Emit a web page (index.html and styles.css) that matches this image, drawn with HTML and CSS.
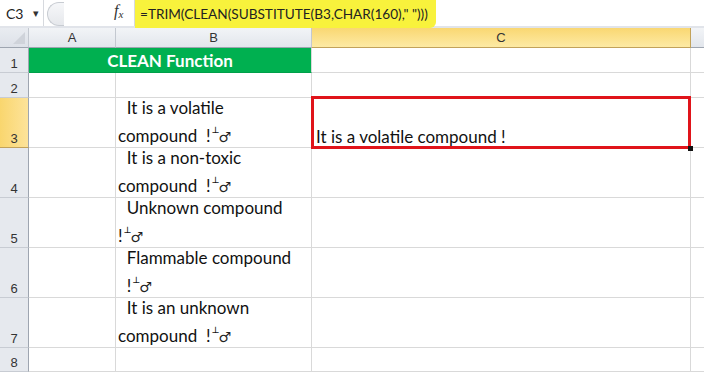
FILE: index.html
```html
<!DOCTYPE html>
<html>
  <head>
    <meta charset="UTF-8">
    <title>CLEAN Function</title>
    <link rel="stylesheet" href="styles.css">
  </head>
  <body>
    <div class="formula-bar">
      <div class="name-box">
        <span>C3</span>
        <span class="drop">&#9662;</span>
      </div>
      <div class="knob"></div>
      <div class="fx">f<sub>x</sub></div>
      <div class="formula">
        <span class="highlight">=TRIM(CLEAN(SUBSTITUTE(B3,CHAR(160)," ")))</span>
      </div>
    </div>

    <div class="sheet">
      <!-- column headers -->
      <div class="corner"><span class="tri"></span></div>
      <div class="col-head">A</div>
      <div class="col-head">B</div>
      <div class="col-head active">C</div>
      <div class="col-head edge"></div>

      <!-- row 1 -->
      <div class="row-head">1</div>
      <div class="cell title">CLEAN Function</div>
      <div class="cell"></div>
      <div class="cell edge"></div>

      <!-- row 2 -->
      <div class="row-head">2</div>
      <div class="cell"></div>
      <div class="cell"></div>
      <div class="cell"></div>
      <div class="cell edge"></div>

      <!-- row 3 -->
      <div class="row-head active">3</div>
      <div class="cell"></div>
      <div class="cell wrap"><span>&nbsp;&nbsp;It is a volatile<br>compound&nbsp;&nbsp;!<span class="junk">&#9524;</span><span class="male">&#9794;</span></span></div>
      <div class="cell result selected">It is a volatile compound !</div>
      <div class="cell edge"></div>

      <!-- row 4 -->
      <div class="row-head">4</div>
      <div class="cell"></div>
      <div class="cell wrap"><span>&nbsp;&nbsp;It is a non-toxic<br>compound&nbsp;&nbsp;!<span class="junk">&#9524;</span><span class="male">&#9794;</span></span></div>
      <div class="cell"></div>
      <div class="cell edge"></div>

      <!-- row 5 -->
      <div class="row-head">5</div>
      <div class="cell"></div>
      <div class="cell wrap"><span>&nbsp;&nbsp;Unknown compound<br>!<span class="junk">&#9524;</span><span class="male">&#9794;</span></span></div>
      <div class="cell"></div>
      <div class="cell edge"></div>

      <!-- row 6 -->
      <div class="row-head">6</div>
      <div class="cell"></div>
      <div class="cell wrap"><span>&nbsp;&nbsp;Flammable compound<br>&nbsp;&nbsp;!<span class="junk">&#9524;</span><span class="male">&#9794;</span></span></div>
      <div class="cell"></div>
      <div class="cell edge"></div>

      <!-- row 7 -->
      <div class="row-head">7</div>
      <div class="cell"></div>
      <div class="cell wrap"><span>&nbsp;&nbsp;It is an unknown<br>compound&nbsp;&nbsp;!<span class="junk">&#9524;</span><span class="male">&#9794;</span></span></div>
      <div class="cell"></div>
      <div class="cell edge"></div>

      <!-- row 8 -->
      <div class="row-head">8</div>
      <div class="cell"></div>
      <div class="cell"></div>
      <div class="cell"></div>
      <div class="cell edge"></div>
    </div>
  </body>
</html>
```

FILE: styles.css
```css
body {
  margin: 0;
  width: 704px;
  height: 372px;
  overflow: hidden;
  background-color: #ffffff;
  font-family: Lato, "Open Sans", sans-serif;
}

.formula-bar {
  display: flex;
  height: 26px;
  border-bottom: 2px solid #e1e4ea;
  background-color: #ffffff;
  font-size: 14px;
  color: #222;
}

.name-box {
  width: 44px;
  display: flex;
  align-items: center;
  padding-left: 6px;
  box-sizing: border-box;
  border-right: 1px solid #d6d9de;
}

.drop {
  font-size: 11px;
  margin-left: 10px;
  color: #333;
}

.knob {
  width: 16px;
  height: 22px;
  margin: 2px 0 0 3px;
  border: 1px solid #c8ccd2;
  border-right: none;
  border-radius: 12px 0 0 12px;
  background: linear-gradient(#f6f7f9, #e6e8ec);
}

.fx {
  margin-left: 50px;
  width: 20px;
  font-family: "Liberation Serif", serif;
  font-style: italic;
  font-size: 16px;
  padding-top: 2px;
  color: #333;
}

.fx sub {
  font-size: 11px;
  vertical-align: -2px;
}

.formula {
  flex: 1;
  border-left: 1px solid #d6d9de;
  display: flex;
}

.highlight {
  display: flex;
  align-items: center;
  height: 28px;
  padding: 0 8px 0 5px;
  background-color: #f8f23c;
  border-radius: 0 0 6px 0;
  font-size: 13.6px;
}

.sheet {
  display: grid;
  grid-template-columns: 29px 87px 196px 379px 13px;
  grid-template-rows: 20px 25px 25px 50px 50px 50px 50px 50px 24px;
  font-size: 17px;
  color: #111;
}

.corner {
  background: linear-gradient(#e9ecf1, #dde1e8);
  border-right: 1px solid #c3c8d0;
  border-bottom: 1px solid #9ea5b0;
  position: relative;
}

.tri {
  position: absolute;
  right: 3px;
  bottom: 3px;
  width: 0;
  height: 0;
  border-left: 12px solid transparent;
  border-bottom: 12px solid #cfd3da;
}

.col-head {
  display: flex;
  align-items: center;
  justify-content: center;
  background: linear-gradient(#f2f4f7, #e2e6ec);
  border-right: 1px solid #c3c8d0;
  border-bottom: 1px solid #9ea5b0;
  font-family: "Liberation Sans", sans-serif;
  font-size: 13px;
  color: #333;
}

.col-head.active {
  background: linear-gradient(#f9d772, #fdeaa4);
  border-right-color: #c2a25a;
  border-bottom-color: #c2a25a;
}

.col-head.edge {
  border-right: none;
}

.row-head {
  display: flex;
  align-items: flex-end;
  justify-content: center;
  padding-bottom: 1px;
  background-color: #e6e9ee;
  border-right: 1px solid #9ea5b0;
  border-bottom: 1px solid #c8ccd3;
  font-family: "Liberation Sans", sans-serif;
  font-size: 13px;
  color: #333;
}

.row-head.active {
  background: linear-gradient(90deg, #f9d66e, #fde39a);
  border-bottom-color: #c2a25a;
}

.cell {
  border-right: 1px solid #d9d9d9;
  border-bottom: 1px solid #d9d9d9;
  padding: 0 2px;
  overflow: hidden;
  white-space: nowrap;
}

.cell.edge {
  border-right: none;
  padding: 0;
}

.title {
  grid-column: span 2;
  background-color: #00b050;
  color: #ffffff;
  font-weight: bold;
  font-size: 17px;
  display: flex;
  align-items: center;
  justify-content: center;
  border-bottom-color: #00a04a;
}

.wrap {
  line-height: 25px;
  display: flex;
  align-items: flex-end;
}

.wrap > span {
  margin-bottom: -3px;
}

.junk {
  font-family: "DejaVu Sans", sans-serif;
  font-size: 10px;
  vertical-align: 6px;
  margin: 0 0 0 2px;
}

.male {
  font-family: "DejaVu Sans", sans-serif;
  font-size: 14px;
  color: #222;
}

.result {
  display: flex;
  align-items: flex-end;
  padding-left: 4px;
}

.selected {
  position: relative;
  overflow: visible;
}

.selected::after {
  content: "";
  position: absolute;
  left: -1px;
  top: -2px;
  right: -1px;
  bottom: -2px;
  border: 3px solid #e0141a;
}

.selected::before {
  content: "";
  position: absolute;
  right: -3px;
  bottom: -4px;
  width: 5px;
  height: 5px;
  background-color: #111;
  z-index: 1;
}
```
